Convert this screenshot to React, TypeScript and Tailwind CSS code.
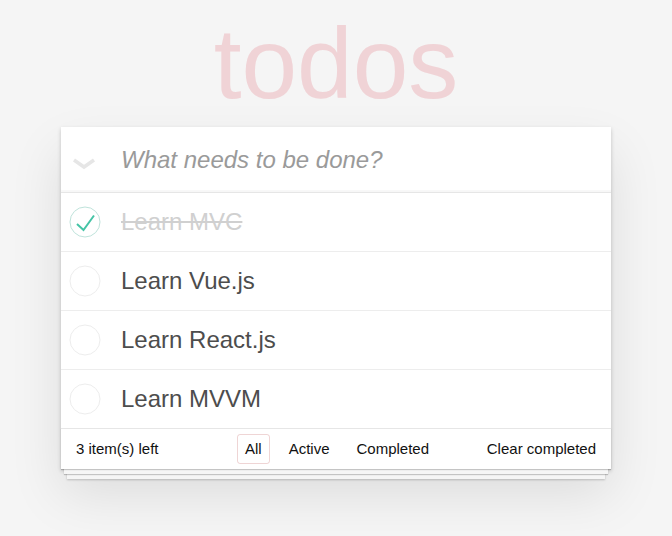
import { useState } from "react"

type Todo = { id: number; title: string; done: boolean }

const initial: Todo[] = [
  { id: 1, title: "Learn MVC", done: true },
  { id: 2, title: "Learn Vue.js", done: false },
  { id: 3, title: "Learn React.js", done: false },
  { id: 4, title: "Learn MVVM", done: false },
]

const Check = ({ done }: { done: boolean }) => (
  <svg width="40" height="40" viewBox="0 0 40 40" className="shrink-0">
    <circle cx="20" cy="20" r="15" fill="none" stroke={done ? "#bfe3db" : "#ededed"} strokeWidth="1" />
    {done && <path d="M12 22 L18.5 28 L29 13.5" fill="none" stroke="#45c4a6" strokeWidth="2" />}
  </svg>
)

const App = () => {
  const [todos, setTodos] = useState(initial)
  const [filter, setFilter] = useState("All")
  const left = todos.filter((t) => !t.done).length

  const toggle = (id: number) =>
    setTodos(todos.map((t) => (t.id === id ? { ...t, done: !t.done } : t)))

  return (
    <div className="min-h-[536px] bg-[#f5f5f5] font-['Liberation_Sans',Arial,sans-serif] text-[15px] text-[#4d4d4d]">
      <h1 className="pt-[13px] h-[113px] text-center text-[100px] leading-[100px] font-thin text-[#f0d3d6]">
        todos
      </h1>
      <div className="mx-auto mt-[14px] w-[550px] bg-white shadow-[0_2px_4px_rgba(0,0,0,0.2),0_25px_50px_rgba(0,0,0,0.1)]">
        <div className="flex h-[65px] items-center shadow-[inset_0_-2px_1px_rgba(0,0,0,0.03)]">
          <div className="flex w-[60px] shrink-0 justify-center pt-[8px] pr-[14px]">
            <svg width="24" height="14" viewBox="0 0 24 14">
              <path d="M2 3 L12 10 L22 3" fill="none" stroke="#e6e6e6" strokeWidth="3.5" />
            </svg>
          </div>
          <input
            className="w-full bg-transparent text-[24px] italic text-[#4d4d4d] outline-none placeholder:text-[#9a9a9a]"
            placeholder="What needs to be done?"
          />
        </div>
        <ul className="border-t border-[#e6e6e6]">
          {todos.map((t) => (
            <li key={t.id} className="flex h-[59px] items-center border-b border-[#ededed] pl-[4px] text-[24px]">
              <button onClick={() => toggle(t.id)} className="flex">
                <Check done={t.done} />
              </button>
              <span className={t.done ? "ml-[16px] text-[#d0d0d0] line-through" : "ml-[16px]"}>{t.title}</span>
            </li>
          ))}
        </ul>
        <div className="grid h-[41px] -mt-[1px] grid-cols-[1fr_auto_1fr] items-center border-t border-[#e6e6e6] px-[15px] text-[#111] shadow-[0_1px_1px_rgba(0,0,0,0.2),0_8px_0_-3px_#f6f6f6,0_9px_1px_-3px_rgba(0,0,0,0.2),0_16px_0_-6px_#f6f6f6,0_17px_2px_-6px_rgba(0,0,0,0.2)]">
          <span>{left} item(s) left</span>
          <ul className="flex gap-[11px] pl-[2px]">
            {["All", "Active", "Completed"].map((f) => (
              <li key={f}>
                <button
                  onClick={() => setFilter(f)}
                  className={
                    filter === f
                      ? "rounded-[3px] border border-[rgba(175,47,47,0.2)] px-[7px] py-[3px]"
                      : "rounded-[3px] border border-transparent px-[7px] py-[3px]"
                  }
                >
                  {f}
                </button>
              </li>
            ))}
          </ul>
          <button className="justify-self-end">Clear completed</button>
        </div>
      </div>
    </div>
  )
}

export default App
